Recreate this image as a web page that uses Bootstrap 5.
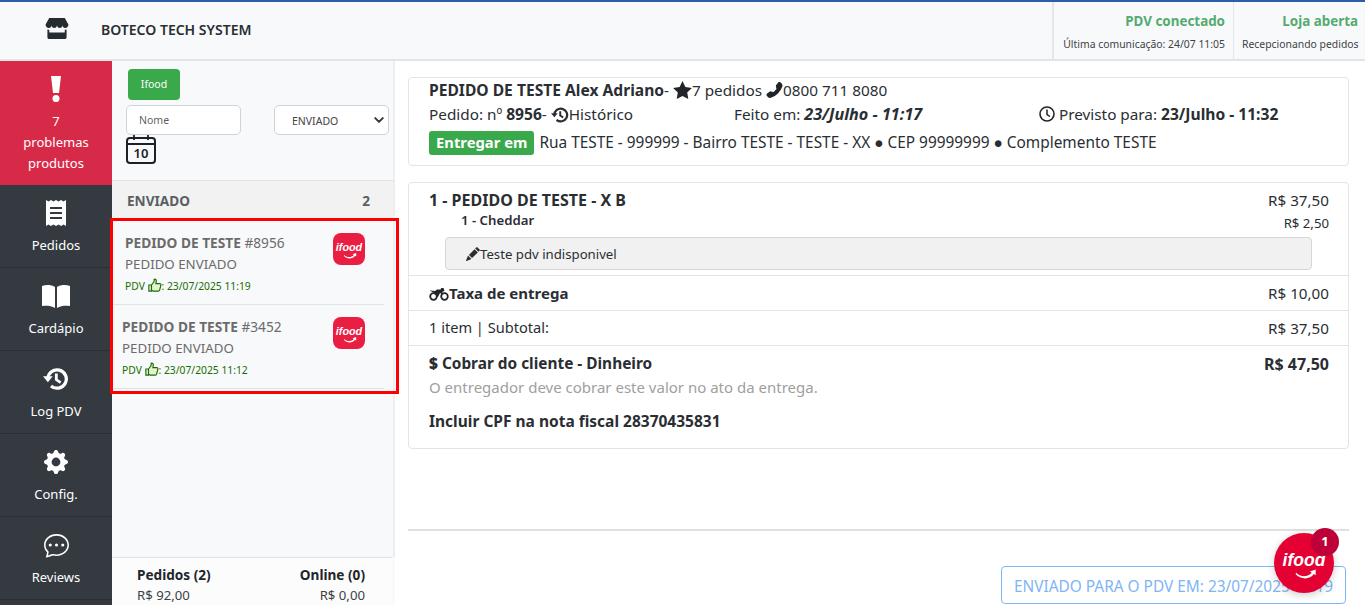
<!DOCTYPE html>
<html lang="pt-BR">
<head>
    <meta charset="UTF-8">
    <meta name="viewport" content="width=device-width, initial-scale=1.0">
    <title>Boteco Tech System</title>
    <link href="https://cdn.jsdelivr.net/npm/bootstrap@5.3.0/dist/css/bootstrap.min.css" rel="stylesheet">
    <style>
        html, body { height: 605px; overflow: hidden; }
        body { font-family: "Noto Sans", sans-serif; font-size: 15px; color: #212529; background: #fff; }
        .tela { height: 605px; border-top: 2px solid #2b5fa6; }

        .topo { height: 59px; background: #f8f9fa; border-bottom: 2px solid #e2e4e7; }
        .topo-marca { width: 101px; padding: 0 0 4px 45px; }
        .topo-nome { font-size: 14px; font-weight: 600; color: #2a2e33; padding-bottom: 2px; }
        .topo-status { border-left: 2px solid #e4e6e9; text-align: right; padding: 10px 8px 0 9px; }
        .topo-status + .topo-status { border-left-width: 1px; padding: 10px 7px 0 8px; width: 132px; }
        .topo-status b { display: block; color: #55ab6f; font-size: 13.4px; font-weight: 700; line-height: 18px; }
        .topo-status span { display: block; font-size: 10.4px; line-height: 14px; margin-top: 7px; color: #3d4247; white-space: nowrap; }

        .corpo { height: 544px; }
        .lateral { width: 112px; flex: none; background: #343a40; }
        .lateral-item { height: 83px; border-bottom: 1px solid #2a2f34; color: #fff; font-size: 13px; text-align: center; padding-top: 14px; }
        .lateral-item svg { display: block; margin: 0 auto 9px; fill: #fff; height: 28px; }
        .lateral-alerta { height: 124px; background: #d72a48; border: 0; padding-top: 14px; line-height: 21px; }
        .lateral-alerta svg { margin-bottom: 8px; }

        .painel { width: 283px; flex: none; background: #f8f9fa; position: relative; }
        .painel-filtros { height: 119px; padding: 8px 0 0 14px; border-right: 2px solid #eceef0; }
        .btn-ifood { width: 52px; height: 31px; font-size: 10.5px; background: #3aa94c; border: 0; border-radius: 4px; color: #fff; margin-left: 2px; padding: 0; display: block; }
        .campo-nome, .campo-status { height: 30px; font-size: 10.5px; border-radius: 5px; color: #5f666d; border-color: #ced4da; }
        .campo-nome { width: 115px; padding: 0 12px; margin-top: 5px; }
        .campo-status { width: 115px; padding: 3px 12px 0 17px; margin: 5px 0 0 33px; color: #444; background-position: right 4px center; background-size: 10px 10px; background-image: url("data:image/svg+xml,%3csvg xmlns='http://www.w3.org/2000/svg' viewBox='0 0 16 16'%3e%3cpath fill='none' stroke='%23343a40' stroke-linecap='round' stroke-linejoin='round' stroke-width='3.2' d='m2 5 6 6 6-6'/%3e%3c/svg%3e"); }
        .painel-titulo { height: 40px; background: #f2f2f2; border-top: 1px solid #e2e3e5; font-size: 13.6px; font-weight: 700; color: #5b5f63; padding: 10px 23px 0 15px; border-right: 2px solid #eceef0; }
        .painel-lista { height: 337px; border-right: 2px solid #eceef0; padding-top: 1px; }
        .pedido { height: 84px; width: 272px; border-bottom: 1px solid #e1e3e5; padding: 13px 0 0 13px; position: relative; color: #6c6a6a; }
        .pedido + .pedido { padding-left: 10px; }
        .pedido h6 { font-size: 13.7px; font-weight: 700; line-height: 18px; margin: 0; color: #6c6a6a; }
        .pedido h6 span { font-weight: 400; }
        .pedido p { font-size: 13.3px; line-height: 18px; margin: 3px 0 0; }
        .pedido small { display: block; font-size: 10.3px; line-height: 14px; margin-top: 5px; color: #176d00; }
        .pedido small svg { vertical-align: -2px; }
        .logo-app { position: absolute; top: 12px; right: 19px; width: 32px; height: 32px; border-radius: 8px; background: #ea1d43; }
        .logo-texto { font-family: "Liberation Sans", sans-serif; font-weight: 700; font-style: italic; fill: #fff; }
        .marcacao { position: absolute; left: -2px; top: 157px; width: 289px; height: 176px; border: 3px solid #f00; pointer-events: none; }
        .painel-rodape { height: 48px; width: 280px; background: #fcfcfc; border-top: 1px solid #e1e3e5; padding: 7px 27px 0 25px; font-size: 13.2px; line-height: 20px; color: #3d4247; }
        .painel-rodape b { display: block; color: #212529; font-weight: 700; font-size: 13.6px; }

        .conteudo { flex: 1; padding: 16px 16px 0 13px; position: relative; color: #2a2e33; }
        .caixa { border: 1px solid #e3e4e6; border-radius: 4px; }
        .caixa-cliente { height: 89px; padding: 0 20px; line-height: 24px; font-size: 15.3px; margin-bottom: 16px; }
        .caixa-cliente strong { font-size: 15.6px; }
        .caixa-cliente em { font-size: 16.2px; }
        .caixa-cliente .linha { height: 24px; white-space: nowrap; }
        .coluna-feito { width: 305px; }
        .coluna-pedido { width: 305px; }
        .etiqueta { background: #3aa94c; color: #fff; font-weight: 700; font-size: 14.8px; border-radius: 3px; padding: 1px 7px 2px; margin-right: 1px; display: inline-block; line-height: 21px; }
        .caixa-cliente .linha-end { margin-top: 5px; font-size: 15.4px; }
        .caixa-itens { height: 267px; font-size: 15.2px; }
        .item-linha { padding: 0 19px 0 20px; border-bottom: 1px solid #e3e4e6; display: flex; justify-content: space-between; align-items: center; height: 35px; }
        .item-linha strong { font-size: 16px; }
        .item-linha .item-taxa { font-size: 15px; }
        .item-subtotal { font-size: 14.6px; }
        .valor-sub { font-size: 15.2px; }
        .item-topo { display: block; height: 93px; padding-top: 7px; position: relative; }
        .item-topo .d-flex { line-height: 20px; }
        .item-adic { font-size: 13.2px; padding-left: 32px; line-height: 20px; }
        .item-adic span + span { padding-top: 3px; }
        .obs { margin: 4px 17px 0 16px; height: 33px; background: #f1f1f1; border: 1px solid #d5d6d8; border-radius: 4px; padding: 0 20px; font-size: 13.2px; line-height: 32px; }
        .item-cobrar { padding: 6px 19px 0 20px; line-height: 24px; }
        .item-cobrar strong { font-size: 15.4px; }
        .item-cobrar .d-flex strong + strong { font-size: 16px; }
        .item-cobrar .aviso { color: #a0a0a0; font-size: 15px; line-height: 23px; }
        .item-cobrar .cpf { font-weight: 700; margin-top: 10px; font-size: 15.5px; }
        .linha-final { border-top: 2px solid #e0e0e0; margin-top: 80px; }
        .btn-enviado { position: absolute; left: 606px; top: 505px; width: 345px; height: 38px; border: 1px solid #7fb4f5; border-radius: 4px; background: #fff; color: #7fb4f5; font-size: 15.4px; line-height: 39px; padding-left: 12px; white-space: nowrap; overflow: hidden; }
        .bolha { position: absolute; left: 879px; top: 472px; width: 60px; height: 60px; border-radius: 50%; background: #e40032; box-shadow: 0 2px 8px rgba(0,0,0,.2); }
        .bolha-num { position: absolute; left: 916px; top: 467px; width: 28px; height: 28px; border-radius: 50%; background: #bd0038; color: #fff; font-size: 13px; font-weight: 700; text-align: center; line-height: 27px; }
    </style>
</head>
<body>
    <svg width="0" height="0" class="d-block">
        <symbol id="i-thumb" viewBox="0 0 16 16">
            <path d="M1 8h3v7H1zM4 8l3-4V1.500c1.500-.5 2.500.5 2.500 2L9 6.500h4.500c1 0 1.500 1 1.200 1.800l-1.400 5.500c-.2.700-.7 1.200-1.500 1.200H6L4 14" fill="#e4f2cf" stroke="#176d00" stroke-width="1.300"/>
        </symbol>
        <symbol id="i-hist" viewBox="0 0 24 24">
            <path d="M4.500 12a8.500 8.500 0 1 1 2.900 6.400" fill="none" stroke="currentColor" stroke-width="3"/>
            <path d="M0 9.500h9L4.500 15zM11 7h2.600v5l3.400 2.400-1.500 2-4.500-3.200z" fill="currentColor"/>
        </symbol>
        <symbol id="i-smile" viewBox="0 0 40 32">
            <path d="M14 23.500c3 3.500 9 3.500 12 0l-1.500-1 4.500-1.500 0 4.500-1.500-1c-3 4.500-10 4.500-14 0z" fill="#fff"/>
        </symbol>
    </svg>

    <div class="tela">
        <header class="topo d-flex">
            <div class="topo-marca d-flex align-items-center">
                <svg width="24" height="21" viewBox="0 0 25 23"><path fill="#262b30" d="M4 0h17l4 7c0 2.200-1.600 4-3.500 4S18.500 9.700 18.500 8c0 1.700-1.400 3-3 3s-3-1.300-3-3c0 1.700-1.400 3-3 3s-3-1.300-3-3c0 1.700-1.200 3-3 3S0 9.200 0 7zM2 12.500c.6.200 1.200.3 2 .3V16h17v-3.200c.8 0 1.400-.1 2-.3V21c0 1-.9 2-2 2H4c-1.100 0-2-1-2-2z"/></svg>
            </div>
            <div class="topo-nome flex-grow-1 d-flex align-items-center">BOTECO TECH SYSTEM</div>
            <div class="topo-status"><b>PDV conectado</b><span>Última comunicação: 24/07 11:05</span></div>
            <div class="topo-status"><b>Loja aberta</b><span>Recepcionando pedidos</span></div>
        </header>

        <div class="corpo d-flex">
            <nav class="lateral">
                <div class="lateral-item lateral-alerta">
                    <svg viewBox="0 0 10 26" width="10"><path d="M0 0h10L8 17H2zM5 19a3.500 3.500 0 1 1 0 7 3.500 3.500 0 0 1 0-7z"/></svg>
                    7<br>problemas<br>produtos
                </div>
                <div class="lateral-item">
                    <svg viewBox="0 0 20 26" width="20"><path fill-rule="evenodd" d="M0 0l2.500 1.500L5 0l2.500 1.500L10 0l2.500 1.500L15 0l2.500 1.500L20 0v26l-2.500-1.500L15 26l-2.500-1.500L10 26l-2.500-1.500L5 26l-2.500-1.500L0 26zM4 7v2h12V7zm0 5v2h12v-2zm0 5v2h12v-2z"/></svg>
                    Pedidos
                </div>
                <div class="lateral-item">
                    <svg viewBox="0 0 28 24" width="28"><path d="M0 2c4-1.500 9-1.500 13 1v21C9 21.500 4 21.500 0 22zM28 2c-4-1.500-9-1.500-13 1v21c4-2.500 9-2.500 13-2z"/></svg>
                    Cardápio
                </div>
                <div class="lateral-item">
                    <svg width="26" class="text-white" viewBox="0 0 24 24"><use href="#i-hist"/></svg>
                    Log PDV
                </div>
                <div class="lateral-item">
                    <svg viewBox="0 0 16 16" width="24"><path d="M9.405 1.050c-.413-1.400-2.397-1.400-2.810 0l-.100.340a1.464 1.464 0 0 1-2.105.872l-.310-.170c-1.283-.698-2.686.705-1.987 1.987l.169.311c.446.820.023 1.841-.872 2.105l-.340.100c-1.400.413-1.400 2.397 0 2.810l.340.100a1.464 1.464 0 0 1 .872 2.105l-.170.310c-.698 1.283.705 2.686 1.987 1.987l.311-.169a1.464 1.464 0 0 1 2.105.872l.100.340c.413 1.400 2.397 1.400 2.810 0l.100-.340a1.464 1.464 0 0 1 2.105-.872l.310.170c1.283.698 2.686-.705 1.987-1.987l-.169-.311a1.464 1.464 0 0 1 .872-2.105l.340-.100c1.400-.413 1.400-2.397 0-2.810l-.340-.100a1.464 1.464 0 0 1-.872-2.105l.170-.310c.698-1.283-.705-2.686-1.987-1.987l-.311.169a1.464 1.464 0 0 1-2.105-.872l-.100-.340zM8 10.930a2.929 2.929 0 1 1 0-5.860 2.929 2.929 0 0 1 0 5.858z"/></svg>
                    Config.
                </div>
                <div class="lateral-item">
                    <svg viewBox="0 0 16 16" width="25"><path d="M5 8a1 1 0 1 1-2 0 1 1 0 0 1 2 0zm4 0a1 1 0 1 1-2 0 1 1 0 0 1 2 0zm3 1a1 1 0 1 0 0-2 1 1 0 0 0 0 2z"/><path d="M2.165 15.803l.020-.004c1.830-.363 2.948-.842 3.468-1.105A9.060 9.060 0 0 0 8 15c4.418 0 8-3.134 8-7s-3.582-7-8-7-8 3.134-8 7c0 1.760.743 3.370 1.970 4.600a10.437 10.437 0 0 1-.524 2.318l-.003.011a10.722 10.722 0 0 1-.244.637c-.079.186.074.394.273.362a21.673 21.673 0 0 0 .693-.125zm.800-3.108a1 1 0 0 0-.287-.801C1.618 10.830 1 9.468 1 8c0-3.192 3.004-6 7-6s7 2.808 7 6c0 3.193-3.004 6-7 6a8.060 8.060 0 0 1-2.088-.272 1 1 0 0 0-.711.074c-.387.196-1.240.570-2.634.893a10.970 10.970 0 0 0 .398-2z"/></svg>
                    Reviews
                </div>
            </nav>

            <section class="painel">
                <div class="painel-filtros">
                    <button class="btn-ifood">Ifood</button>
                    <div class="d-flex">
                        <input type="text" class="form-control campo-nome" placeholder="Nome">
                        <select class="form-select campo-status"><option>ENVIADO</option></select>
                    </div>
                    <svg width="31" height="29" viewBox="0 0 31 29" class="d-block">
                        <rect x="1" y="3" width="28" height="25" rx="3" fill="none" stroke="#1d2125" stroke-width="2"/>
                        <path d="M1 9h28M8 0v5M22 0v5" stroke="#1d2125" stroke-width="1.800"/>
                        <text x="15" y="23" text-anchor="middle" font-size="13" font-weight="600" fill="#1d2125">10</text>
                    </svg>
                </div>
                <div class="painel-titulo d-flex justify-content-between"><span>ENVIADO</span><span>2</span></div>
                <div class="painel-lista">
                    <div class="pedido">
                        <h6>PEDIDO DE TESTE <span>#8956</span></h6>
                        <p>PEDIDO ENVIADO</p>
                        <small>PDV <svg width="14" height="14"><use href="#i-thumb"/></svg>: 23/07/2025 11:19</small>
                        <div class="logo-app"><svg width="32" height="32" viewBox="0 0 40 32"><text x="20" y="18" text-anchor="middle" font-size="13.500" class="logo-texto">ifood</text><use href="#i-smile"/></svg></div>
                    </div>
                    <div class="pedido">
                        <h6>PEDIDO DE TESTE <span>#3452</span></h6>
                        <p>PEDIDO ENVIADO</p>
                        <small>PDV <svg width="14" height="14"><use href="#i-thumb"/></svg>: 23/07/2025 11:12</small>
                        <div class="logo-app"><svg width="32" height="32" viewBox="0 0 40 32"><text x="20" y="18" text-anchor="middle" font-size="13.500" class="logo-texto">ifood</text><use href="#i-smile"/></svg></div>
                    </div>
                </div>
                <div class="painel-rodape d-flex justify-content-between">
                    <div><b>Pedidos (2)</b>R$ 92,00</div>
                    <div class="text-end"><b>Online (0)</b>R$ 0,00</div>
                </div>
                <div class="marcacao"></div>
            </section>

            <main class="conteudo">
                <div class="caixa caixa-cliente">
                    <div class="linha"><strong>PEDIDO DE TESTE Alex Adriano</strong>- <svg width="19" height="18" viewBox="0 0 24 23" style="vertical-align:-3px"><path fill="#212529" d="M12 0l3.700 7.600 8.300 1.200-6 5.900 1.400 8.300-7.400-3.900L4.600 23 6 14.700 0 8.800l8.300-1.200z"/></svg>7 pedidos <svg width="17" height="16" viewBox="0 0 16 16" style="vertical-align:-2px"><path fill="#212529" transform="matrix(-1 0 0 1 16 0)" d="M1.885.511a1.745 1.745 0 0 1 2.610.163L6.290 2.980c.329.423.445.974.315 1.494l-.547 2.190a.678.678 0 0 0 .178.643l2.457 2.457a.678.678 0 0 0 .644.178l2.189-.547a1.745 1.745 0 0 1 1.494.315l2.306 1.794c.829.645.905 1.870.163 2.611l-1.034 1.034c-.740.740-1.846 1.065-2.877.702a18.634 18.634 0 0 1-7.010-4.420 18.634 18.634 0 0 1-4.420-7.009c-.362-1.030-.037-2.137.703-2.877L1.885.511z"/></svg>0800 711 8080</div>
                    <div class="linha d-flex">
                        <div class="coluna-pedido">Pedido: nº <strong>8956</strong>- <svg width="18" height="18" class="align-text-bottom"><use href="#i-hist"/></svg>Histórico</div>
                        <div class="coluna-feito">Feito em: <strong><em>23/Julho - 11:17</em></strong></div>
                        <div><svg width="16" height="16" viewBox="0 0 16 16" style="vertical-align:-2px"><circle cx="8" cy="8" r="7" fill="none" stroke="#212529" stroke-width="1.600"/><path d="M8 3.500V8.500l3 2" fill="none" stroke="#212529" stroke-width="1.500"/></svg> Previsto para: <strong>23/Julho - 11:32</strong></div>
                    </div>
                    <div class="linha linha-end"><span class="etiqueta">Entregar em</span> Rua TESTE - 999999 - Bairro TESTE - TESTE - XX ● CEP 99999999 ● Complemento TESTE</div>
                </div>

                <div class="caixa caixa-itens">
                    <div class="item-linha item-topo">
                        <div class="d-flex justify-content-between"><strong>1 - PEDIDO DE TESTE - X B</strong><span>R$ 37,50</span></div>
                        <div class="d-flex justify-content-between item-adic"><span class="fw-semibold">1 - Cheddar</span><span>R$ 2,50</span></div>
                        <div class="obs"><svg width="14" height="14" viewBox="0 0 16 16" style="vertical-align:-2px"><path fill="#2a2e33" d="M12.854.146a.5.5 0 0 0-.707 0L10.500 1.793 14.207 5.500l1.647-1.646a.5.5 0 0 0 0-.708l-3-3zm.646 6.061L9.793 2.500 3.293 9H3.500a.5.5 0 0 1 .5.5v.5h.5a.5.5 0 0 1 .5.5v.5h.5a.5.5 0 0 1 .5.5v.5h.5a.5.5 0 0 1 .5.5v.207l6.500-6.500zm-7.468 7.468A.5.5 0 0 1 6 13.500V13h-.5a.5.5 0 0 1-.5-.5V12h-.5a.5.5 0 0 1-.5-.5V11h-.5a.5.5 0 0 1-.5-.5V10h-.5a.499.499 0 0 1-.175-.032l-.179.178a.5.5 0 0 0-.110.168l-2 5a.5.5 0 0 0 .650.650l5-2a.5.5 0 0 0 .168-.110l.178-.178z"/></svg>Teste pdv indisponivel</div>
                    </div>
                    <div class="item-linha"><strong class="item-taxa"><svg width="20" height="13" viewBox="0 0 20 13"><circle cx="4.500" cy="8.500" r="3.300" fill="none" stroke="#212529" stroke-width="1.800"/><circle cx="15.500" cy="8.500" r="3.300" fill="none" stroke="#212529" stroke-width="1.800"/><path fill="#212529" d="M1 2.500l5 .5 2-1.500h3.500l.8-1.500h2.200l1 3-2.500 1 1.500 1.500-1 1-2.500-1.500-2 4H8c0-3-2.500-4.500-7-6z"/></svg>Taxa de entrega</strong><span>R$ 10,00</span></div>
                    <div class="item-linha item-subtotal"><span>1 item | Subtotal:</span><span class="valor-sub">R$ 37,50</span></div>
                    <div class="item-cobrar">
                        <div class="d-flex justify-content-between"><strong><b class="me-1">$</b>Cobrar do cliente - Dinheiro</strong><strong>R$ 47,50</strong></div>
                        <div class="aviso">O entregador deve cobrar este valor no ato da entrega.</div>
                        <div class="cpf">Incluir CPF na nota fiscal 28370435831</div>
                    </div>
                </div>
                <div class="linha-final"></div>
                <div class="btn-enviado">ENVIADO PARA O PDV EM: 23/07/2025 11:19</div>
                <div class="bolha d-flex align-items-center justify-content-center"><svg width="52" height="42" viewBox="0 0 40 32"><text x="20" y="18" text-anchor="middle" font-size="13.500" class="logo-texto">ifood</text><use href="#i-smile"/></svg></div>
                <div class="bolha-num">1</div>
            </main>
        </div>
    </div>
</body>
</html>
